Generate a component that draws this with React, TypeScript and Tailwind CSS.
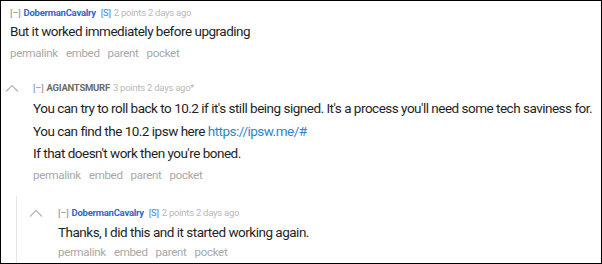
import React from "react";

const Chevron = () => (
  <svg width="14" height="8" viewBox="0 0 14 8" fill="none">
    <path d="M1 7.5 L7 1.5 L13 7.5" stroke="#b5b5b5" strokeWidth="1.2" />
  </svg>
);

const Actions = () => (
  <div className="flex gap-[8px] text-[11.5px] leading-[16px] tracking-[-0.3px] text-[#a8a8a8]">
    <span>permalink</span>
    <span>embed</span>
    <span>parent</span>
    <span>pocket</span>
  </div>
);

const Header = ({
  user,
  blue,
  sub,
  meta,
}: {
  user: string;
  blue?: boolean;
  sub?: boolean;
  meta: string;
}) => (
  <div className="flex items-baseline gap-[3px] text-[9.5px] leading-[12px] tracking-[-0.25px]">
    <span className="text-[#8a8a8a]">[–]</span>
    <span
      className={
        blue ? "font-bold text-[#3366cc]" : "font-bold text-[#6b6b6b]"
      }
    >
      {user}
    </span>
    {sub && <span className="text-[#4d7ed9] ml-[2px]">[S]</span>}
    <span className="text-[#b8b8b8]">{meta}</span>
  </div>
);

export default function App() {
  return (
    <div
      className="w-[602px] h-[264px] bg-white border border-black overflow-hidden text-[#1f1f1f]"
      style={{ fontFamily: "Roboto, 'Liberation Sans', sans-serif" }}
    >
      <div className="pl-[9px] pt-[6px]">
        <Header user="DobermanCavalry" blue sub meta="2 points 2 days ago" />
        <p className="text-[13.5px] leading-[20px] tracking-[-0.5px] mt-[2px]">
          But it worked immediately before upgrading
        </p>
        <div className="mt-[4px]">
          <Actions />
        </div>
      </div>

      <div className="flex pl-[4px] pt-[21px]">
        <div className="w-[28px] pt-[2px]">
          <Chevron />
        </div>
        <div>
          <Header user="AGIANTSMURF" meta="3 points 2 days ago*" />
          <div className="text-[13.5px] leading-[22.5px] tracking-[-0.5px] mt-[3px] flex flex-col">
            <p className="whitespace-nowrap">
              You can try to roll back to 10.2 if it's still being signed.
              It's a process you'll need some tech saviness for.
            </p>
            <p>
              You can find the 10.2 ipsw here{" "}
              <span className="text-[#2b87d1]">https://ipsw.me/#</span>
            </p>
            <p>If that doesn't work then you're boned.</p>
          </div>
          <div className="mt-[2px]">
            <Actions />
          </div>
        </div>
      </div>

      <div className="ml-[15px] mt-[13px] border-l border-[#e6e6e6] pl-[12px] pt-[11px] pb-[20px] flex">
        <div className="w-[29px] pt-[2px]">
          <Chevron />
        </div>
        <div>
          <Header user="DobermanCavalry" blue sub meta="2 points 2 days ago" />
          <p className="text-[13.5px] leading-[20px] tracking-[-0.5px] mt-[3px]">
            Thanks, I did this and it started working again.
          </p>
          <div className="mt-[2px]">
            <Actions />
          </div>
        </div>
      </div>
    </div>
  );
}
